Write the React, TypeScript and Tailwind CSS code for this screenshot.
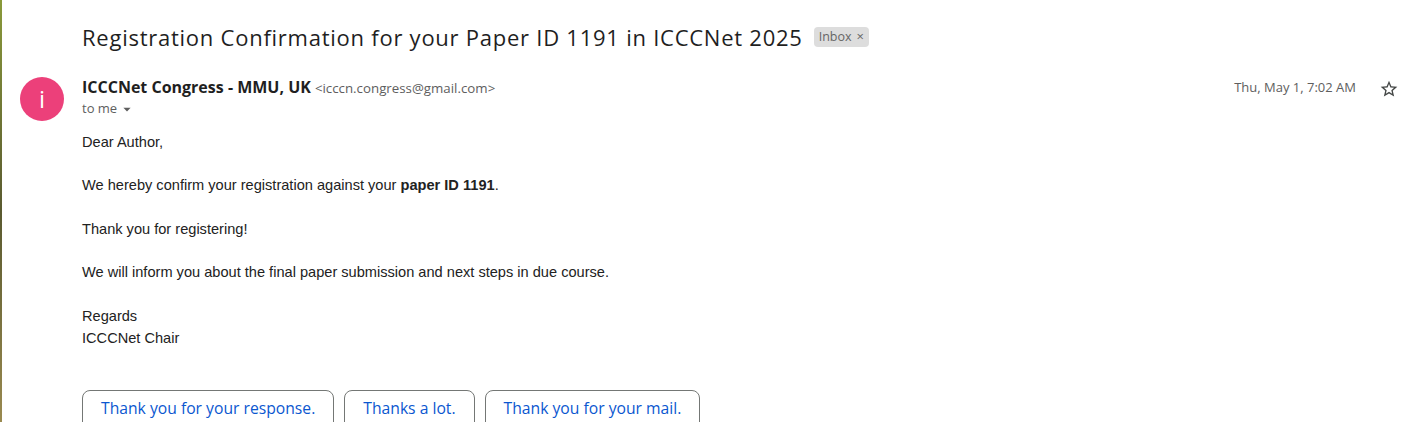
import React from "react";

function Star() {
  return (
    <svg width="20" height="20" viewBox="0 0 24 24" fill="#444746">
      <path d="M22 9.24l-7.19-.62L12 2 9.19 8.63 2 9.24l5.46 4.73L5.82 21 12 17.27 18.18 21l-1.63-7.03L22 9.24zM12 15.4l-3.76 2.27 1-4.28-3.32-2.88 4.38-.38L12 6.1l1.71 4.04 4.38.38-3.32 2.88 1 4.28L12 15.4z" />
    </svg>
  );
}

const gs = { fontFamily: "'Open Sans', Roboto, sans-serif" };

export default function App() {
  return (
    <div className="flex h-[422px] w-[1417px] overflow-hidden bg-white" style={gs}>
      <div className="w-[2px] shrink-0 bg-gradient-to-b from-[#8a9a3a] via-[#5a5a30] to-[#9a8a50]" />
      <div className="flex-1">
        <div className="flex items-center pl-[80px] pt-[21px]">
          <h1 className="text-[22px] leading-[32px] tracking-[0.75px] text-[#1f1f1f]">
            Registration Confirmation for your Paper ID 1191 in ICCCNet 2025
          </h1>
          <span className="ml-[11px] flex h-[20px] items-center rounded-[4px] bg-[#dddddd] px-[5px] text-[12.5px] text-[#666666]">
            Inbox <span className="ml-[5px] text-[13px]">×</span>
          </span>
        </div>
        <div className="mt-[24px] flex">
          <div className="ml-[18px] flex h-[44px] w-[44px] shrink-0 items-center justify-center rounded-full bg-[#ec407a] text-[24px] text-white">
            i
          </div>
          <div className="ml-[18px] flex-1">
            <div className="flex items-start justify-between">
              <div>
                <div className="flex h-[20px] items-baseline">
                  <span className="text-[16px] leading-[20px] font-bold text-[#1f1f1f]">ICCCNet Congress - MMU, UK</span>
                  <span className="ml-[4px] text-[13.3px] leading-[20px] text-[#5e5e5e]">&lt;icccn.congress@gmail.com&gt;</span>
                </div>
                <div className="mt-[2px] flex items-center text-[13px] text-[#5e5e5e]">
                  to me
                  <svg className="ml-[4px]" width="12" height="12" viewBox="0 0 10 10"><path d="M2 4h6l-3 3z" fill="#5e5e5e" /></svg>
                </div>
              </div>
              <div className="mr-[18px] flex items-center">
                <span className="text-[13px] text-[#5e5e5e]">Thu, May 1, 7:02 AM</span>
                <span className="ml-[23px] mt-[2px]"><Star /></span>
              </div>
            </div>
            <div className="mt-[13px] text-[14.6px] leading-[21.8px] text-[#222222]" style={{ fontFamily: "'Liberation Sans', Arial, sans-serif" }}>
              <p>Dear Author,</p>
              <p className="mt-[21.8px]">We hereby confirm your registration against your <b>paper ID 1191</b>.</p>
              <p className="mt-[21.8px]">Thank you for registering!</p>
              <p className="mt-[21.8px]">We will inform you about the final paper submission and next steps in due course.</p>
              <p className="mt-[21.8px]">Regards</p>
              <p>ICCCNet Chair</p>
            </div>
            <div className="mt-[41px] flex gap-[10px]">
              {["Thank you for your response.", "Thanks a lot.", "Thank you for your mail."].map((t) => (
                <button key={t} className="h-[40px] rounded-[8px] border border-[#747775] px-[18px] pb-[5px] text-[15.7px] leading-[30px] text-[#0b57d0]">
                  {t}
                </button>
              ))}
            </div>
          </div>
        </div>
      </div>
    </div>
  );
}
